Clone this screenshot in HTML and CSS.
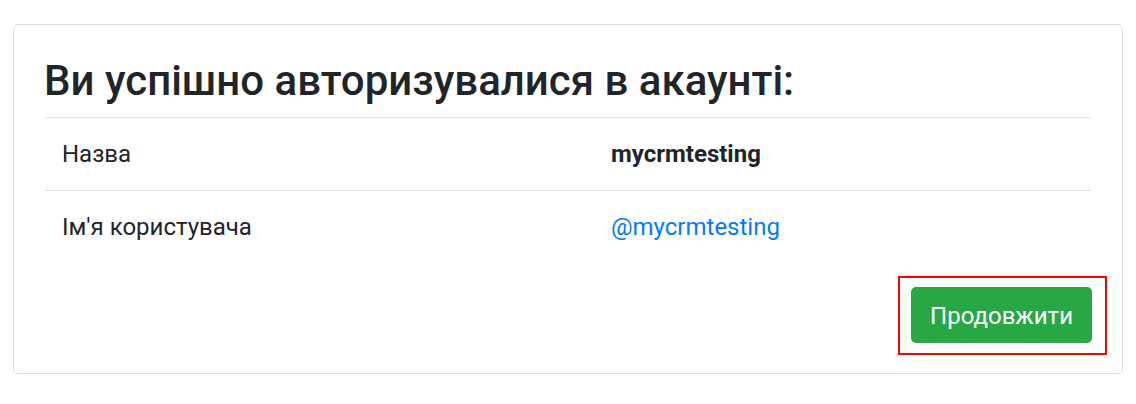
FILE: index.html
```html
<!DOCTYPE html>
<html lang="uk">
<head>
<meta charset="utf-8">
<title>Авторизація</title>
<link rel="stylesheet" href="styles.css">
</head>
<body>
<div class="card">
  <h1 class="title">Ви успішно авторизувалися в акаунті:</h1>
  <table class="info">
    <tr>
      <td class="label">Назва</td>
      <td class="value"><strong>mycrmtesting</strong></td>
    </tr>
    <tr>
      <td class="label">Ім'я користувача</td>
      <td class="value"><a class="link" href="#">@mycrmtesting</a></td>
    </tr>
  </table>
  <div class="actions">
    <button class="btn-continue" type="button">Продовжити</button>
  </div>
</div>
</body>
</html>
```
FILE: styles.css
```css
html, body {
  margin: 0;
  background: #fff;
}
body {
  padding: 24px 13px;
  font-family: Roboto, "Liberation Sans", sans-serif;
  color: #212529;
}
.card {
  border: 1px solid #dedede;
  border-radius: 5px;
  padding: 30px;
}
.title {
  margin: 0 0 11px;
  padding-top: 1px;
  font-size: 42px;
  font-weight: 500;
  line-height: 50px;
}
.info {
  width: 100%;
  border-collapse: collapse;
  font-size: 24px;
}
.info td {
  border-top: 1px solid #dee2e6;
  padding: 24px 18px;
  line-height: 24px;
}
.info .label {
  width: 513px;
}
.info strong {
  font-weight: 700;
}
.link {
  color: #007bff;
  text-decoration: none;
}
.actions {
  margin-top: 24px;
  display: flex;
  justify-content: flex-end;
}
.btn-continue {
  position: relative;
  background: #28a745;
  color: #fff;
  border: none;
  border-radius: 5px;
  padding: 13px 19px 11px;
  font-family: Roboto, "Liberation Sans", sans-serif;
  font-size: 24px;
  line-height: 32px;
  cursor: pointer;
}
.btn-continue::after {
  content: "";
  position: absolute;
  top: -11px;
  left: -13px;
  right: -15px;
  bottom: -12px;
  border: 2px solid #ff0000;
}
```
